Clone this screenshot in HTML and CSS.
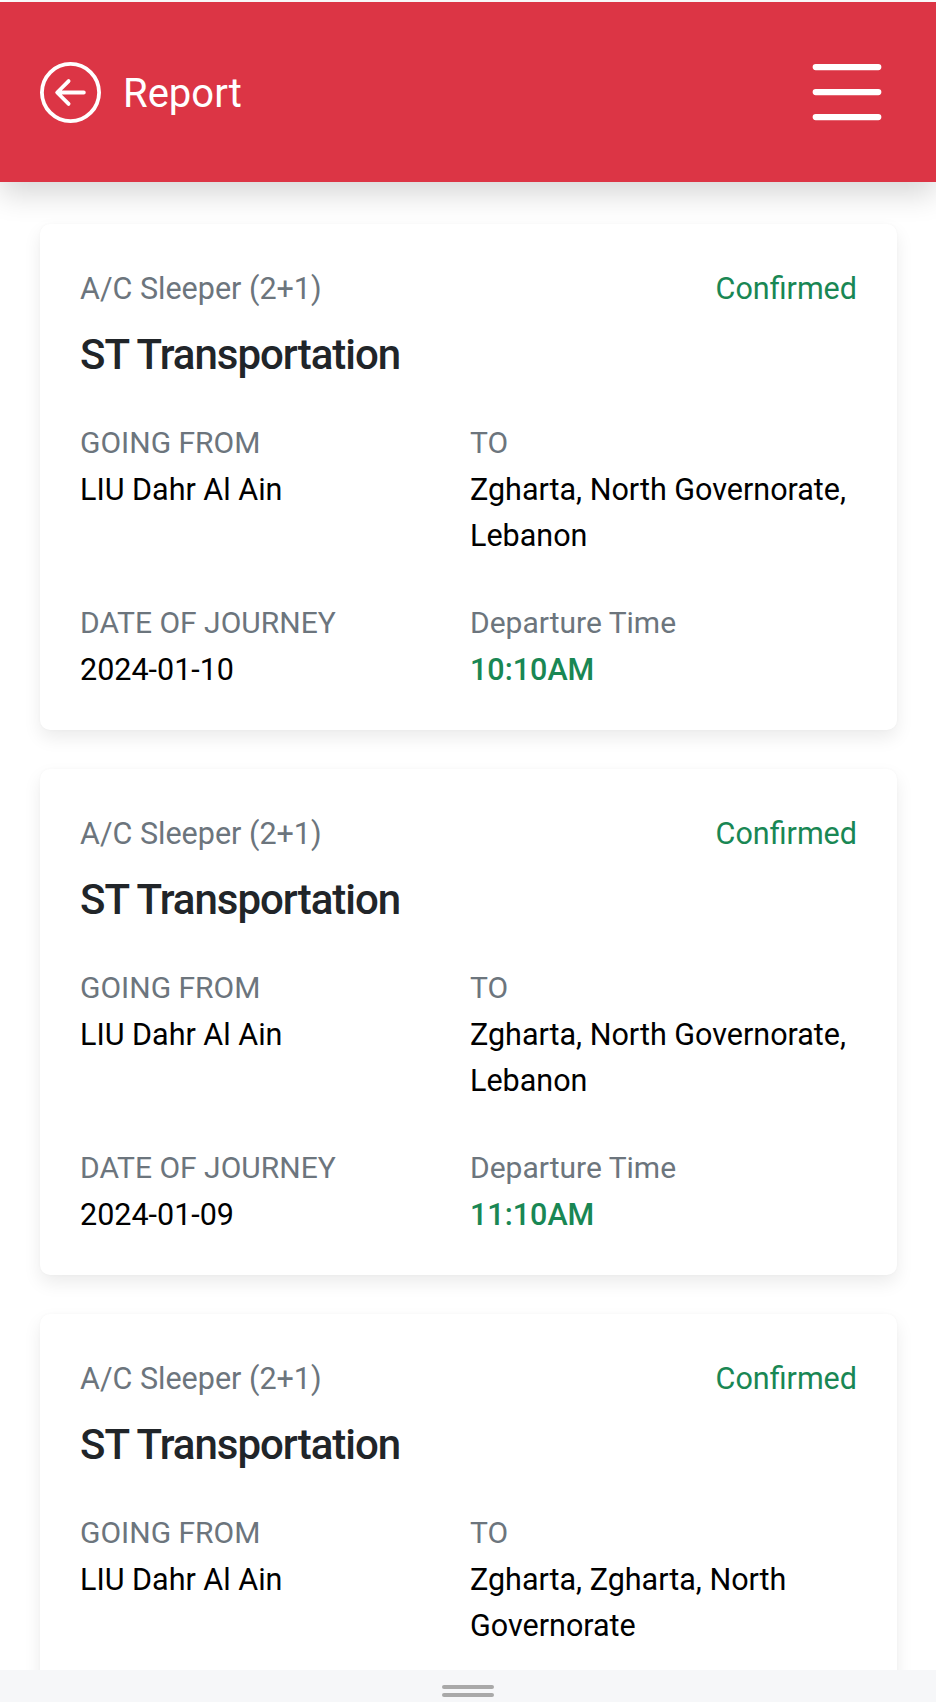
FILE: index.html
```html
<!DOCTYPE html>
<html lang="en">
<head>
<meta charset="utf-8">
<title>Report</title>
<link rel="stylesheet" href="styles.css">
</head>
<body>
<div class="app">
  <header class="topbar">
    <div class="topbar-left">
      <svg class="back-icon" viewBox="0 0 16 16" fill="currentColor" aria-hidden="true"><path fill-rule="evenodd" d="M1 8a7 7 0 1 0 14 0A7 7 0 0 0 1 8m15 0A8 8 0 1 1 0 8a8 8 0 0 1 16 0m-4.5-.5a.5.5 0 0 1 0 1H5.707l2.147 2.146a.5.5 0 0 1-.708.708l-3-3a.5.5 0 0 1 0-.708l3-3a.5.5 0 1 1 .708.708L5.707 7.5z"/></svg>
      <span class="topbar-title">Report</span>
    </div>
    <svg class="menu-icon" viewBox="0 0 16 16" fill="currentColor" aria-hidden="true"><path fill-rule="evenodd" d="M2.5 12a.5.5 0 0 1 .5-.5h10a.5.5 0 0 1 0 1H3a.5.5 0 0 1-.5-.5m0-4a.5.5 0 0 1 .5-.5h10a.5.5 0 0 1 0 1H3a.5.5 0 0 1-.5-.5m0-4a.5.5 0 0 1 .5-.5h10a.5.5 0 0 1 0 1H3a.5.5 0 0 1-.5-.5"/></svg>
  </header>

  <main class="list">
    <article class="card">
      <div class="card-top">
        <span class="bus-type">A/C Sleeper (2+1)</span>
        <span class="status">Confirmed</span>
      </div>
      <h4 class="operator">ST Transportation</h4>
      <div class="details">
        <div class="field">
          <div class="label">GOING FROM</div>
          <div class="value">LIU Dahr Al Ain</div>
        </div>
        <div class="field">
          <div class="label">TO</div>
          <div class="value">Zgharta, North Governorate, Lebanon</div>
        </div>
        <div class="field">
          <div class="label">DATE OF JOURNEY</div>
          <div class="value">2024-01-10</div>
        </div>
        <div class="field">
          <div class="label">Departure Time</div>
          <div class="value time">10:10AM</div>
        </div>
      </div>
    </article>

    <article class="card">
      <div class="card-top">
        <span class="bus-type">A/C Sleeper (2+1)</span>
        <span class="status">Confirmed</span>
      </div>
      <h4 class="operator">ST Transportation</h4>
      <div class="details">
        <div class="field">
          <div class="label">GOING FROM</div>
          <div class="value">LIU Dahr Al Ain</div>
        </div>
        <div class="field">
          <div class="label">TO</div>
          <div class="value">Zgharta, North Governorate, Lebanon</div>
        </div>
        <div class="field">
          <div class="label">DATE OF JOURNEY</div>
          <div class="value">2024-01-09</div>
        </div>
        <div class="field">
          <div class="label">Departure Time</div>
          <div class="value time">11:10AM</div>
        </div>
      </div>
    </article>

    <article class="card">
      <div class="card-top">
        <span class="bus-type">A/C Sleeper (2+1)</span>
        <span class="status">Confirmed</span>
      </div>
      <h4 class="operator">ST Transportation</h4>
      <div class="details">
        <div class="field">
          <div class="label">GOING FROM</div>
          <div class="value">LIU Dahr Al Ain</div>
        </div>
        <div class="field">
          <div class="label">TO</div>
          <div class="value">Zgharta, Zgharta, North Governorate</div>
        </div>
      </div>
    </article>
  </main>

  <div class="bottom-bar">
    <span class="handle"></span>
    <span class="handle"></span>
  </div>
</div>
</body>
</html>
```

FILE: styles.css
```css
html,
body {
  margin: 0;
  padding: 0;
  background: #ffffff;
}

body {
  font-family: Roboto, "Liberation Sans", Arial, sans-serif;
  overflow: hidden;
}

.app {
  height: 1702px;
  box-sizing: border-box;
  padding-top: 2px;
  display: flex;
  flex-direction: column;
}

/* Header */
.topbar {
  flex: 0 0 180px;
  box-sizing: border-box;
  background: #dc3545;
  color: #ffffff;
  display: flex;
  align-items: center;
  justify-content: space-between;
  padding: 0 39px 0 40px;
  box-shadow: 0 12px 28px rgba(0, 0, 0, 0.16);
  position: relative;
  z-index: 1;
}

.topbar-left {
  display: flex;
  align-items: center;
  gap: 22px;
}

.back-icon {
  width: 61px;
  height: 61px;
  display: block;
}

.topbar-title {
  font-family: Roboto, "Liberation Sans", sans-serif;
  font-size: 40px;
  font-weight: 400;
  line-height: 1;
  padding-top: 4px;
}

.menu-icon {
  width: 100px;
  height: 100px;
  display: block;
}

/* List */
.list {
  flex: 1 1 auto;
  min-height: 0;
  overflow: hidden;
  padding: 42px 39px 0 40px;
  display: flex;
  flex-direction: column;
  gap: 39px;
}

.card {
  flex-shrink: 0;
  background: #ffffff;
  border-radius: 10px;
  box-shadow: 0 8px 18px rgba(0, 0, 0, 0.08), 0 0 3px rgba(0, 0, 0, 0.03);
  padding: 42px 40px 37px;
}

.card-top {
  display: flex;
  justify-content: space-between;
  align-items: baseline;
  font-size: 30.5px;
  line-height: 45.75px;
}

.bus-type {
  color: #6c757d;
}

.status {
  color: #198754;
}

.operator {
  margin: 18px 0 0;
  font-size: 42px;
  line-height: 50.4px;
  font-weight: 500;
  letter-spacing: -1px;
  color: #212529;
}

.details {
  margin-top: 40px;
  display: grid;
  grid-template-columns: 1fr 1fr;
  column-gap: 3px;
  row-gap: 41px;
}

.label {
  color: #6c757d;
  font-size: 30px;
  line-height: 45.75px;
}

.value {
  margin-top: 1.5px;
  color: #000000;
  font-size: 30.5px;
  line-height: 45.75px;
}

.value.time {
  color: #198754;
  font-weight: 500;
}

/* Bottom bar */
.bottom-bar {
  flex: 0 0 32px;
  box-sizing: border-box;
  background: #f6f7f9;
  display: flex;
  flex-direction: column;
  align-items: center;
  padding-top: 15px;
  gap: 4px;
}

.handle {
  display: block;
  width: 52px;
  height: 4px;
  border-radius: 2px;
  background: #a9a9a9;
}
```
